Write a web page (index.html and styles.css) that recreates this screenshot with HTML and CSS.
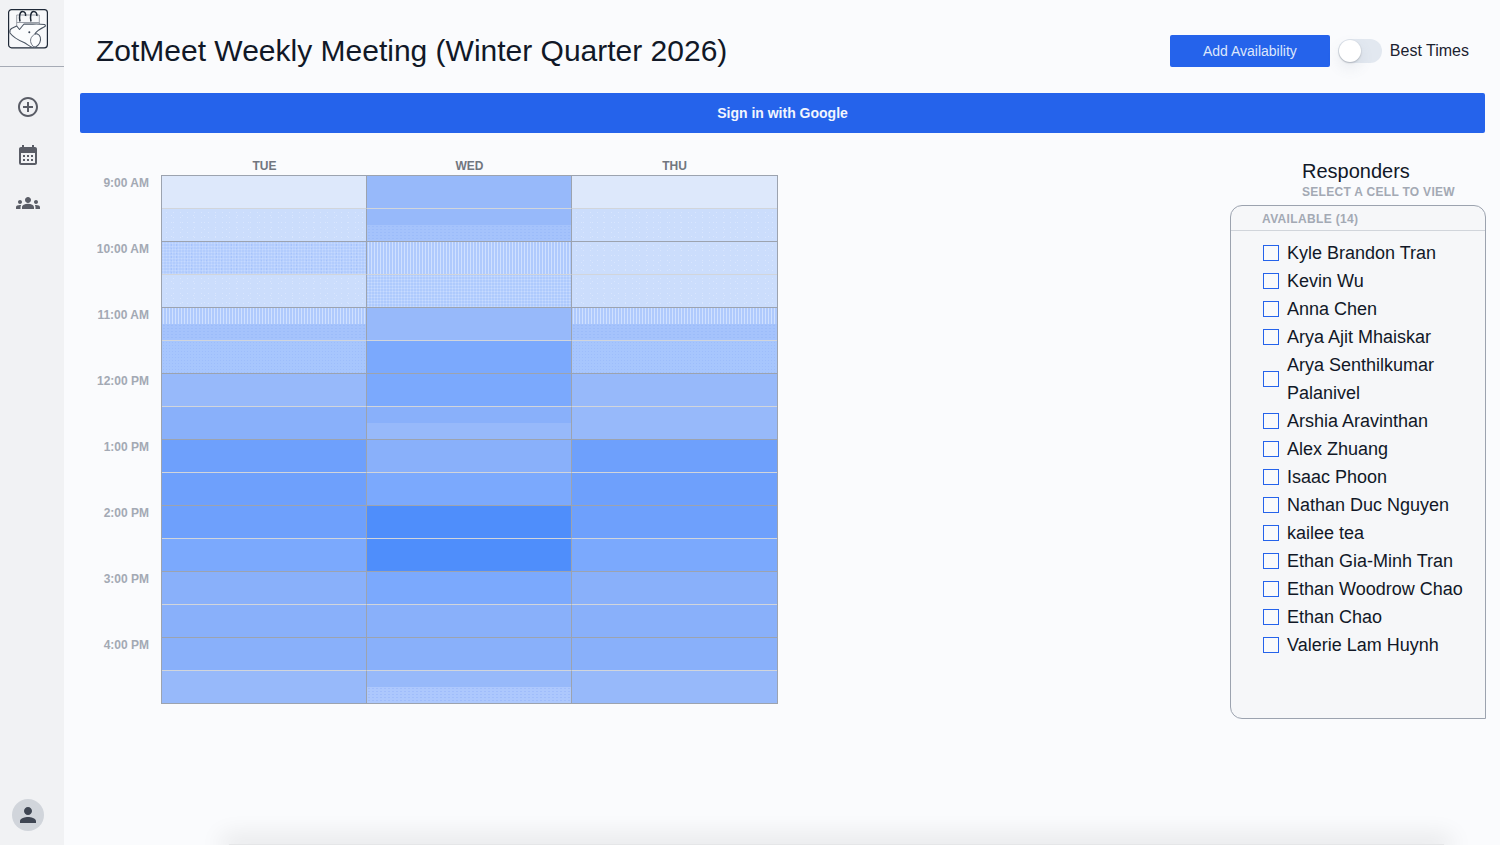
FILE: index.html
```html
<!DOCTYPE html>
<html lang="en">
<head>
<meta charset="utf-8">
<title>ZotMeet Weekly Meeting (Winter Quarter 2026)</title>
<link rel="stylesheet" href="styles.css">
</head>
<body>
<div class="app">
  <aside class="sidebar">
    <div class="brand">
      <svg class="logo" viewBox="0 0 40 40" width="40" height="40" fill="none">
        <rect x="0.6" y="0.6" width="38.8" height="38.2" rx="3" fill="#f7f8fa" stroke="#1f2937" stroke-width="1.2"/>
        <path d="M8.700 19V6H31.300V16M8.700 13.500H31.300" stroke="#9a9fa8" stroke-width="1"/>
        <path d="M12 12.500C11 8 11.500 2.500 14.500 2.500C17 2.500 18 4.500 17.500 7M23 12.500C22 8 22.500 2.500 25.500 2.500C28 2.500 29.300 4.500 28.800 7" stroke="#1f2937" stroke-width="1.500"/>
        <path d="M2 24C1.500 22 2 20.500 3.500 19.500L8.700 17L11.500 20.500L16 15C22 15.500 31 14.500 36.500 15.500C38 16 37.500 17.500 36 18C32 20 29 22 27 24.500C30.500 24.500 33 27 32.500 31C32 35.500 28.500 38.500 25 38.500C22 38 19 35 16 33.500C10 31 5 28 2 24Z" fill="#fbfcfd" stroke="#4b5563" stroke-width="1.100" stroke-linejoin="round"/>
        <path d="M28 25C24 26 21.500 30 23 34C24 36.500 25.500 38 27 38" stroke="#6b7280" stroke-width="1"/>
        <circle cx="21.300" cy="23.300" r="1" fill="#374151"/>
      </svg>
    </div>
    <nav class="nav">
      <svg class="icon" viewBox="0 0 24 24"><path d="M13 7h-2v4H7v2h4v4h2v-4h4v-2h-4V7zm-1-5C6.480 2 2 6.480 2 12s4.480 10 10 10 10-4.480 10-10S17.520 2 12 2zm0 18c-4.410 0-8-3.590-8-8s3.590-8 8-8 8 3.590 8 8-3.590 8-8 8z"/></svg>
      <svg class="icon" viewBox="0 0 24 24"><path d="M19 4h-1V2h-2v2H8V2H6v2H5c-1.110 0-1.990.9-1.990 2L3 20a2 2 0 0 0 2 2h14c1.100 0 2-.9 2-2V6c0-1.100-.9-2-2-2zm0 16H5V10h14v10zM9 14H7v-2h2v2zm4 0h-2v-2h2v2zm4 0h-2v-2h2v2zm-8 4H7v-2h2v2zm4 0h-2v-2h2v2zm4 0h-2v-2h2v2z"/></svg>
      <svg class="icon" viewBox="0 0 24 24"><path d="M12 12.750c1.630 0 3.070.39 4.240.9 1.080.48 1.760 1.560 1.760 2.730V18H6v-1.610c0-1.180.68-2.260 1.760-2.730 1.170-.52 2.610-.91 4.240-.91zM4 13c1.100 0 2-.9 2-2s-.9-2-2-2-2 .9-2 2 .9 2 2 2zm1.130 1.100c-.37-.06-.74-.1-1.130-.1-.99 0-1.930.21-2.780.58C.48 14.900 0 15.620 0 16.430V18h4.500v-1.610c0-.83.23-1.610.63-2.290zM20 13c1.100 0 2-.9 2-2s-.9-2-2-2-2 .9-2 2 .9 2 2 2zm4 3.430c0-.81-.48-1.530-1.220-1.850-.85-.37-1.790-.58-2.780-.58-.39 0-.76.04-1.130.1.4.68.63 1.460.63 2.290V18H24v-1.570zM12 6c1.660 0 3 1.340 3 3s-1.340 3-3 3-3-1.340-3-3 1.340-3 3-3z"/></svg>
    </nav>
    <div class="avatar">
      <svg class="icon avatar-icon" viewBox="0 0 24 24"><path d="M12 12c2.210 0 4-1.790 4-4s-1.790-4-4-4-4 1.790-4 4 1.790 4 4 4zm0 2c-2.670 0-8 1.340-8 4v2h16v-2c0-2.660-5.330-4-8-4z"/></svg>
    </div>
  </aside>

  <main class="main">
    <header class="header">
      <h1 class="title">ZotMeet Weekly Meeting (Winter Quarter 2026)</h1>
      <button class="add-btn">Add Availability</button>
      <div class="toggle"><span class="knob"></span></div>
      <span class="toggle-label">Best Times</span>
    </header>

    <button class="signin">Sign in with Google</button>

    <section class="schedule">
      <div class="times">
        <div class="time">9:00 AM</div>
        <div class="time">10:00 AM</div>
        <div class="time">11:00 AM</div>
        <div class="time">12:00 PM</div>
        <div class="time">1:00 PM</div>
        <div class="time">2:00 PM</div>
        <div class="time">3:00 PM</div>
        <div class="time">4:00 PM</div>
      </div>

      <div class="calendar">
        <div class="days">
          <div class="day">TUE</div>
          <div class="day">WED</div>
          <div class="day">THU</div>
        </div>
        <div class="grid">
          <div class="cell half"><div class="slot l0"></div></div>
          <div class="cell half"><div class="slot l1"></div></div>
          <div class="cell half"><div class="slot l0"></div></div>

          <div class="cell"><div class="slot d1"></div></div>
          <div class="cell"><div class="slot l1"></div><div class="slot d4"></div></div>
          <div class="cell"><div class="slot d1"></div></div>

          <div class="cell half"><div class="slot d3"></div></div>
          <div class="cell half"><div class="slot d2"></div></div>
          <div class="cell half"><div class="slot d1"></div></div>

          <div class="cell"><div class="slot d1"></div></div>
          <div class="cell"><div class="slot d3b"></div></div>
          <div class="cell"><div class="slot d1"></div></div>

          <div class="cell half"><div class="slot d2"></div><div class="slot d4"></div></div>
          <div class="cell half"><div class="slot l1"></div></div>
          <div class="cell half"><div class="slot d2"></div><div class="slot d4"></div></div>

          <div class="cell"><div class="slot d5"></div></div>
          <div class="cell"><div class="slot l3"></div></div>
          <div class="cell"><div class="slot d5"></div></div>

          <div class="cell half"><div class="slot l1"></div></div>
          <div class="cell half"><div class="slot l3"></div></div>
          <div class="cell half"><div class="slot l1"></div></div>

          <div class="cell"><div class="slot l2"></div></div>
          <div class="cell"><div class="slot l2"></div><div class="slot l1"></div></div>
          <div class="cell"><div class="slot l1"></div></div>

          <div class="cell half"><div class="slot l4"></div></div>
          <div class="cell half"><div class="slot l2"></div></div>
          <div class="cell half"><div class="slot l4"></div></div>

          <div class="cell"><div class="slot l4"></div></div>
          <div class="cell"><div class="slot l3"></div></div>
          <div class="cell"><div class="slot l4"></div></div>

          <div class="cell half"><div class="slot l4"></div></div>
          <div class="cell half"><div class="slot l5"></div></div>
          <div class="cell half"><div class="slot l4"></div></div>

          <div class="cell"><div class="slot l3"></div></div>
          <div class="cell"><div class="slot l5"></div></div>
          <div class="cell"><div class="slot l3"></div></div>

          <div class="cell half"><div class="slot l2"></div></div>
          <div class="cell half"><div class="slot l3"></div></div>
          <div class="cell half"><div class="slot l2"></div></div>

          <div class="cell"><div class="slot l2"></div></div>
          <div class="cell"><div class="slot l2"></div></div>
          <div class="cell"><div class="slot l2"></div></div>

          <div class="cell half"><div class="slot l2"></div></div>
          <div class="cell half"><div class="slot l2"></div></div>
          <div class="cell half"><div class="slot l2"></div></div>

          <div class="cell"><div class="slot l1"></div></div>
          <div class="cell"><div class="slot l1"></div><div class="slot d6"></div></div>
          <div class="cell"><div class="slot l1"></div></div>
        </div>
      </div>

      <aside class="responders">
        <h2 class="resp-title">Responders</h2>
        <p class="resp-sub">SELECT A CELL TO VIEW</p>
        <div class="panel">
          <div class="panel-head">AVAILABLE (14)</div>
          <ul class="people">
            <li class="person"><span class="check"></span><span>Kyle Brandon Tran</span></li>
            <li class="person"><span class="check"></span><span>Kevin Wu</span></li>
            <li class="person"><span class="check"></span><span>Anna Chen</span></li>
            <li class="person"><span class="check"></span><span>Arya Ajit Mhaiskar</span></li>
            <li class="person"><span class="check"></span><span>Arya Senthilkumar Palanivel</span></li>
            <li class="person"><span class="check"></span><span>Arshia Aravinthan</span></li>
            <li class="person"><span class="check"></span><span>Alex Zhuang</span></li>
            <li class="person"><span class="check"></span><span>Isaac Phoon</span></li>
            <li class="person"><span class="check"></span><span>Nathan Duc Nguyen</span></li>
            <li class="person"><span class="check"></span><span>kailee tea</span></li>
            <li class="person"><span class="check"></span><span>Ethan Gia-Minh Tran</span></li>
            <li class="person"><span class="check"></span><span>Ethan Woodrow Chao</span></li>
            <li class="person"><span class="check"></span><span>Ethan Chao</span></li>
            <li class="person"><span class="check"></span><span>Valerie Lam Huynh</span></li>
          </ul>
        </div>
      </aside>
    </section>
    <div class="edge-shadow"></div>
  </main>
</div>
</body>
</html>
```

FILE: styles.css
```css
* { box-sizing: border-box; }
html, body { margin: 0; height: 845px; overflow: hidden; }
body { background: #fafbfd; color: #111827; font-family: "Liberation Sans", Arial, sans-serif; }

.app { display: flex; height: 845px; }

/* Sidebar */
.sidebar { width: 64px; flex: none; display: flex; flex-direction: column; background: #f1f2f4; }
.brand { height: 67px; padding: 9px 16px 0 8px; border-bottom: 1.500px solid #a6abb5; }
.logo { display: block; }
.nav { display: flex; flex-direction: column; align-items: center; gap: 24px; padding: 28px 8px 0 0; }
.icon { display: block; width: 24px; height: 24px; fill: #5a5d66; }
.avatar { width: 32px; height: 32px; margin: auto 0 14px 12px; border-radius: 50%; background: #d1d5db; display: flex; align-items: center; justify-content: center; }
.avatar-icon { fill: #3f4653; }

/* Main */
.main { position: relative; flex: 1; min-width: 0; padding: 0 14px 0 16px; }
.header { height: 93px; padding: 8px 17px 0 16px; display: flex; align-items: center; }
.title { flex: 1; margin: 0; font-size: 30px; line-height: 36px; font-weight: 400; color: #111827; }
.add-btn { width: 160px; height: 32px; border: 0; border-radius: 2px; background: #2563eb; color: #dde7fc; font: 400 14px "Liberation Sans", Arial, sans-serif; }
.toggle { width: 44px; height: 24px; margin: 0 8px; border-radius: 12px; background: #e2e8f0; padding: 1px; }
.knob { display: block; width: 22px; height: 22px; border-radius: 50%; background: #fff; box-shadow: 0 1px 2px rgba(0,0,0,.18), 0 0 0 1px rgba(0,0,0,.02), 0 6px 14px rgba(100,116,139,.12); }
.toggle-label { font-size: 16px; line-height: 24px; color: #1b2230; }
.signin { display: block; width: 1405px; height: 40px; border: 0; border-radius: 2px; background: #2563eb; color: #f1f5fe; font: 700 14px "Liberation Sans", Arial, sans-serif; }

/* Schedule */
.schedule { display: flex; align-items: flex-start; margin-top: 24px; }
.times { width: 69px; margin-right: 12px; padding-top: 18px; }
.time { height: 66px; font-size: 12px; line-height: 16px; font-weight: 700; color: #a3a9b4; text-align: right; }
.calendar { width: 617px; }
.days { display: grid; grid-template-columns: 205px 205px 205px; height: 18px; padding-left: 1px; }
.day { font-size: 12px; line-height: 18px; font-weight: 700; color: #71767f; text-align: center; }
.grid { display: grid; grid-template-columns: repeat(3, 205px); grid-auto-rows: 33px; border: 1px solid #9ca3af; border-bottom: 0; }
.cell { display: flex; flex-direction: column; border-right: 1px solid #9ca3af; border-bottom: 1px solid #9ca3af; }
.cell:nth-child(3n) { border-right: 0; }
.cell.half { border-bottom-color: #d1d5db; }
.slot { flex: 1; }

/* Availability levels */
.l0 { background: #dde8fb; }
.l1 { background: #97b9fa; }
.l2 { background: #89b0fa; }
.l3 { background: #7ba9fd; }
.l4 { background: #6ea0fc; }
.l5 { background: #4f8efb; }

.d1 {
  background-color: #cbddfc;
  background-image: radial-gradient(circle, #d9e6fe .7px, transparent .9px), radial-gradient(circle, #d9e6fe .7px, transparent .9px);
  background-size: 7px 5px, 11px 7px;
  background-position: 1px 1px, 4px 3px;
}
.d2 {
  background-color: #afcafd;
  background-image: radial-gradient(circle, #cfe0ff .8px, transparent 1px);
  background-size: 3px 2px;
}
.d3 {
  background-color: #b2ccfd;
  background-image: radial-gradient(circle, #c5d9ff .9px, transparent 1.100px), radial-gradient(circle, #a6c3fc .8px, transparent 1px);
  background-size: 3px 3px, 5px 4px;
  background-position: 0 0, 2px 1px;
}
.d3b {
  background-color: #aecafd;
  background-image: radial-gradient(circle, #c8dbff .9px, transparent 1.100px);
  background-size: 3px 3px;
}
.d4 {
  background-color: #a5c3fc;
  background-image: radial-gradient(circle, #9cbcfa .7px, transparent .9px);
  background-size: 4px 3px;
}
.d5 {
  background-color: #a7c6fd;
  background-image: radial-gradient(circle, #9dbdfb .7px, transparent .9px);
  background-size: 3px 3px;
}
.d6 {
  background-color: #adc8fd;
  background-image: radial-gradient(circle, #a0bdfb .7px, transparent .9px);
  background-size: 4px 3px;
}

/* Responders */
.responders { width: 256px; margin-left: auto; }
.resp-title { margin: 0; padding-left: 72px; font-size: 20px; line-height: 28px; font-weight: 400; color: #111827; }
.resp-sub { margin: 0 0 6px; padding-left: 72px; font-size: 12px; line-height: 14px; font-weight: 700; letter-spacing: .3px; color: #a3a9b4; white-space: nowrap; }
.panel { height: 514px; border: 1px solid #9ca3af; border-radius: 12px 12px 0 12px; background: #f6f7f9; }
.panel-head { height: 25px; padding: 1px 0 0 31px; font-size: 12px; line-height: 24px; font-weight: 700; letter-spacing: .35px; color: #a3a9b4; border-bottom: 1px solid #d1d5db; }
.people { list-style: none; margin: 0; padding: 8px 16px 0 32px; }
.person { display: flex; align-items: center; gap: 8px; font-size: 18px; line-height: 28px; color: #111827; }
.check { flex: none; width: 16px; height: 16px; border: 1px solid #2563eb; background: #f9fafb; }

.edge-shadow { position: absolute; left: 165px; bottom: 0; width: 1215px; height: 1px; background: #e5e6e8; box-shadow: 0 0 24px 7px rgba(0,0,0,.11); }
```
